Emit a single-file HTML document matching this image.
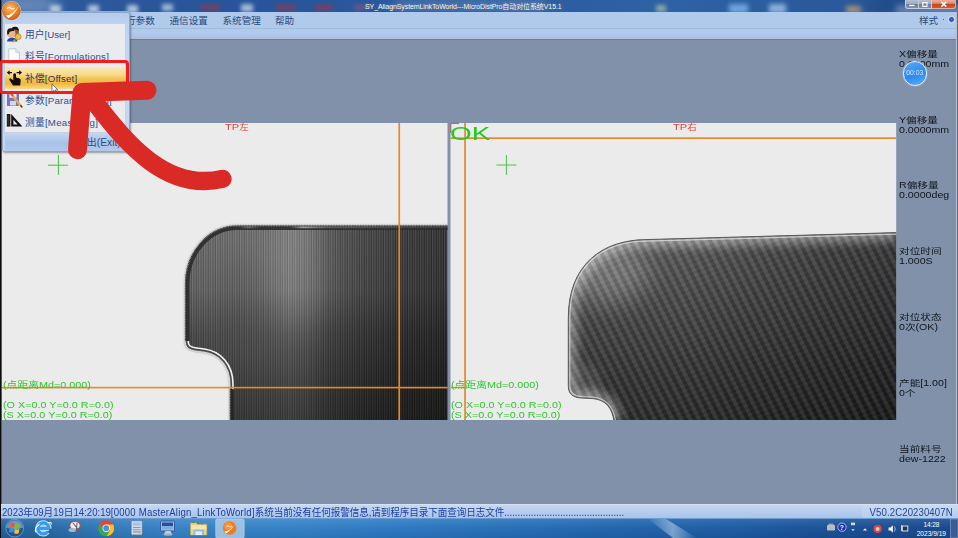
<!DOCTYPE html>
<html lang="zh">
<head>
<meta charset="utf-8">
<title>SY_AliagnSystemLinkToWorld---MicroDistPro自动对位系统V15.1</title>
<style>
*{box-sizing:border-box;margin:0;padding:0}
html,body{width:958px;height:538px;overflow:hidden}
body{position:relative;background:#8091a9;font-family:"Liberation Sans","Noto Sans CJK SC",sans-serif;color:#1f3f70}
.abs{position:absolute}
.t{position:absolute;white-space:nowrap;line-height:1;transform-origin:0 0}
#titlebar{left:0;top:0;width:958px;height:12px;background:linear-gradient(90deg,#2d5c9c 0%,#27549a 25%,#2a5a9e 45%,#2d62a4 70%,#265494 100%);overflow:hidden}
#menubar{left:0;top:11.5px;width:956px;height:17px;background:#b0caeb}
#substrip{left:0;top:27.9px;width:956px;height:11.9px;background:linear-gradient(#b4cceb 0,#b1c9ea 40%,#a9c3e6 78%,#b6c4da 86%,#6f7b8f 94%,#6f7b8f 100%);border-top:1.2px solid #a0bcdc}
#work{left:0;top:39.8px;width:956px;height:465px;background:#8091a9}
.panel{background:#ebebeb;overflow:hidden}
#status{left:0;top:504.3px;width:958px;height:14px;background:linear-gradient(#c6d8f3,#a9c3ea);border-top:1px solid #d5e2f5}
#taskbar{left:0;top:518.3px;width:958px;height:19.7px;background:linear-gradient(rgba(255,255,255,.10),rgba(255,255,255,0) 45%,rgba(0,0,20,.10)),linear-gradient(90deg,#27629c 0%,#2a6aa6 5%,#3179b8 10%,#3884c8 18%,#3684c8 28%,#2f7cc4 40%,#2870b8 54%,#2366ae 65%,#1f5ea6 76%,#1c5298 87%,#1b4a8c 100%);border-top:1px solid #6a9cd0}
.g{color:#2ec62e}
.side{color:#10151c;font-size:8.5px;transform:scaleX(1.25)}
.mi{color:#294878;font-size:9.6px}
</style>
</head>
<body>
<div id="titlebar" class="abs">
<div class="abs" style="left:-5px;top:-4px;width:60px;height:18px;background:#8aa4c8;filter:blur(8px);opacity:0.75"></div>
<div class="abs" style="left:50px;top:5px;width:11px;height:8px;background:#d0deec;filter:blur(2.2px);opacity:0.8"></div>
<div class="abs" style="left:88px;top:5px;width:11px;height:8px;background:#d0deec;filter:blur(2.2px);opacity:0.8"></div>
<div class="abs" style="left:127px;top:5px;width:11px;height:8px;background:#d0deec;filter:blur(2.2px);opacity:0.8"></div>
<div class="abs" style="left:162px;top:4px;width:11px;height:7px;background:#c8d8e8;filter:blur(2.2px);opacity:0.75"></div>
<div class="abs" style="left:241px;top:4px;width:12px;height:8px;background:#d0dcea;filter:blur(2.2px);opacity:0.75"></div>
<div class="abs" style="left:201px;top:4.5px;width:19px;height:5px;background:#8c3a50;filter:blur(2px);opacity:0.85"></div>
<div class="abs" style="left:276px;top:4.5px;width:19px;height:5px;background:#8c3a50;filter:blur(2px);opacity:0.85"></div>
<div class="abs" style="left:314px;top:4.5px;width:19px;height:5px;background:#8c3a50;filter:blur(2px);opacity:0.85"></div>
<div class="abs" style="left:354px;top:5px;width:12px;height:5px;background:#8a5a78;filter:blur(2px);opacity:0.7"></div>
<div class="abs" style="left:395px;top:-2px;width:150px;height:14px;background:#b8c8e0;filter:blur(6px);opacity:0.22"></div>
<div class="abs" style="left:656px;top:5px;width:10px;height:7px;background:#b8c4b0;filter:blur(2px);opacity:0.7"></div>
<div class="abs" style="left:729px;top:4px;width:19px;height:9px;background:#7ab4ec;filter:blur(2.5px);opacity:0.85"></div>
<div class="abs" style="left:769px;top:4px;width:17px;height:9px;background:#a8c8ec;filter:blur(2.5px);opacity:0.8"></div>
<div class="abs" style="left:846px;top:6px;width:15px;height:7px;background:#c8a070;filter:blur(2.5px);opacity:0.8"></div>
<div class="abs" style="left:870px;top:-4px;width:90px;height:18px;background:#183c74;filter:blur(8px);opacity:0.5"></div>
<div class="t" style="left:365px;top:2.5px;font-size:7px;color:#fff;letter-spacing:-.1px;text-shadow:0 0 3px rgba(200,220,245,.55),0 0 1px #123">SY_AliagnSystemLinkToWorld---MicroDistPro自动对位系统V15.1</div>
<div class="abs" style="left:896px;top:5px;width:66px;height:10px;background:#9cb0cc;filter:blur(3px);opacity:.55"></div>
<div class="abs" style="left:904.5px;top:0;width:14.3px;height:8.5px;background:linear-gradient(#b4bfce 0,#9eacc0 45%,#6c809c 50%,#7c90ac 100%);border:.8px solid #c4d0e0;border-top:0;border-radius:0 0 0 3px"></div>
<div class="abs" style="left:918.8px;top:0;width:13.2px;height:8.5px;background:linear-gradient(#b4bfce 0,#9eacc0 45%,#6c809c 50%,#7c90ac 100%);border:.8px solid #c4d0e0;border-top:0;border-left:0"></div>
<div class="abs" style="left:932px;top:0;width:23.6px;height:8.5px;background:linear-gradient(#eeb09c 0,#e08c70 42%,#c8481e 52%,#cc5a30 100%);border:.8px solid #d8b0a8;border-top:0;border-left:0;border-radius:0 0 3px 0"></div>
<svg class="abs" style="left:900px;top:0" width="58" height="12" viewBox="900 0 58 12">
<rect x="909" y="4.6" width="5.6" height="1.7" fill="#fff" stroke="#5a6a84" stroke-width=".3"/>
<rect x="922.8" y="2.6" width="4.2" height="3.8" fill="none" stroke="#fff" stroke-width="1.1"/>
<path d="M941.4,1.8 L946.2,6.6 M946.2,1.8 L941.4,6.6" stroke="#fff" stroke-width="1.5"/>
</svg>
</div>
<div id="menubar" class="abs">
<div class="t mi" style="left:126px;top:4.3px">行参数</div>
<div class="t mi" style="left:169.5px;top:4.3px">通信设置</div>
<div class="t mi" style="left:222.5px;top:4.3px">系统管理</div>
<div class="t mi" style="left:275px;top:4.3px">帮助</div>
<div class="t mi" style="left:919px;top:4.3px">样式</div>
<div class="abs" style="left:942.5px;top:7px;width:1.5px;height:1.5px;background:#4a648c"></div>
<div class="abs" style="left:947.6px;top:4.2px;width:7.6px;height:7.6px;border-radius:50%;background:radial-gradient(circle closest-side at 50% 50%,#4a78d8 0,#2448a8 55%,#b0c2e2 75%,#d4e0f2 100%)"></div>
</div>
<div id="substrip" class="abs"></div>
<div id="work" class="abs"></div>
<svg class="abs" style="left:0;top:0" width="958" height="538" viewBox="0 0 958 538">
<defs>
<linearGradient id="lgL" gradientUnits="userSpaceOnUse" x1="185" y1="0" x2="448" y2="0">
<stop offset="0" stop-color="#626262"/><stop offset=".1" stop-color="#6a6a6a"/><stop offset=".3" stop-color="#717171"/><stop offset=".4" stop-color="#7c7c7c"/><stop offset=".46" stop-color="#727272"/><stop offset=".55" stop-color="#575757"/><stop offset=".68" stop-color="#444"/><stop offset=".82" stop-color="#383838"/><stop offset="1" stop-color="#2e2e2e"/>
</linearGradient>
<linearGradient id="lgLv" gradientUnits="userSpaceOnUse" x1="0" y1="225" x2="0" y2="420">
<stop offset="0" stop-color="#000" stop-opacity="0"/><stop offset=".33" stop-color="#000" stop-opacity=".05"/><stop offset=".56" stop-color="#000" stop-opacity=".28"/><stop offset=".8" stop-color="#000" stop-opacity=".42"/><stop offset="1" stop-color="#000" stop-opacity=".5"/>
</linearGradient>
<pattern id="vl" width="2.4" height="4" patternUnits="userSpaceOnUse"><rect width="1.2" height="4" fill="#fff" opacity=".13"/><rect x="1.2" width="1.2" height="4" fill="#000" opacity=".16"/></pattern>
<linearGradient id="lgR" gradientUnits="userSpaceOnUse" x1="700" y1="236" x2="700" y2="420">
<stop offset="0" stop-color="#606060"/><stop offset=".25" stop-color="#525252"/><stop offset=".5" stop-color="#444"/><stop offset=".75" stop-color="#353535"/><stop offset="1" stop-color="#2a2a2a"/>
</linearGradient>
<linearGradient id="lgRe" gradientUnits="userSpaceOnUse" x1="568" y1="0" x2="896" y2="0">
<stop offset="0" stop-color="#000" stop-opacity="0"/><stop offset=".35" stop-color="#000" stop-opacity=".04"/><stop offset=".6" stop-color="#000" stop-opacity=".2"/><stop offset=".8" stop-color="#000" stop-opacity=".32"/><stop offset="1" stop-color="#000" stop-opacity=".42"/>
</linearGradient>
<pattern id="wv" width="7.9" height="7.9" patternUnits="userSpaceOnUse" patternTransform="rotate(63)"><rect width="7.9" height="3.9" fill="#fff" opacity=".075"/><rect y="3.9" width="7.9" height="4" fill="#000" opacity=".12"/></pattern>
<pattern id="wv2" width="5" height="5" patternUnits="userSpaceOnUse" patternTransform="rotate(-20)"><rect width="5" height="2.5" fill="#fff" opacity=".018"/><rect y="2.5" width="5" height="2.5" fill="#000" opacity=".03"/></pattern>
<filter id="bl" x="-50%" y="-50%" width="200%" height="200%"><feGaussianBlur stdDeviation="12"/></filter>
<linearGradient id="rimL" gradientUnits="userSpaceOnUse" x1="240" y1="0" x2="448" y2="0"><stop offset="0" stop-color="#aaa" stop-opacity="0"/><stop offset=".04" stop-color="#aaa" stop-opacity=".5"/><stop offset=".1" stop-color="#aaa" stop-opacity="0"/><stop offset=".24" stop-color="#bbb" stop-opacity="0"/><stop offset=".3" stop-color="#ccc" stop-opacity=".7"/><stop offset=".42" stop-color="#aaa" stop-opacity=".35"/><stop offset="1" stop-color="#888" stop-opacity=".15"/></linearGradient>
<clipPath id="cpLs"><path d="M448,224.7 L237,224.7 C207.9,224.7 184.2,251.1 184.2,283.7 L184.2,341 C184.2,348 188,351 196,352 L204,353 C218,355 229,366 229,384 L229,390 L229,421 L448,421 Z"/></clipPath>
<clipPath id="cpRs"><path d="M897,232.6 L645,239.6 C602.2,240.4 568.3,264.4 568.3,318 L568.3,386 C568.3,394 573,397.5 581,398 L592,398.5 C606,399.5 612,408 614,421 L897,421 Z"/></clipPath>
<filter id="bl5" x="-10%" y="-10%" width="120%" height="120%"><feGaussianBlur stdDeviation="5"/></filter>
<clipPath id="cpL"><rect x="2" y="123" width="445.5" height="297"/></clipPath>
<clipPath id="cpR"><rect x="450.5" y="123" width="445.7" height="297"/></clipPath>
</defs>
<!-- panels -->
<rect x="2" y="123" width="445.5" height="297" fill="#ebebeb"/>
<rect x="450.5" y="123" width="445.7" height="297" fill="#ebebeb"/>
<rect x="0" y="0" width="1.4" height="538" fill="#0c0c10"/>
<!-- left image -->
<g clip-path="url(#cpL)">
<path d="M448,224.7 L237,224.7 C207.9,224.7 184.2,251.1 184.2,283.7 L184.2,341 C184.2,348 188,351 196,352 L204,353 C218,355 229,366 229,384 L229,390 L229,421 L448,421 Z" fill="url(#lgL)"/>
<path d="M448,224.7 L237,224.7 C207.9,224.7 184.2,251.1 184.2,283.7 L184.2,341 C184.2,348 188,351 196,352 L204,353 C218,355 229,366 229,384 L229,390 L229,421 L448,421 Z" fill="url(#vl)"/>
<g clip-path="url(#cpLs)"><ellipse cx="296" cy="270" rx="30" ry="70" fill="#fff" opacity=".06" filter="url(#bl)"/>
<ellipse cx="240" cy="300" rx="30" ry="40" fill="#000" opacity=".07" filter="url(#bl)"/></g>
<path d="M448,224.7 L237,224.7 C207.9,224.7 184.2,251.1 184.2,283.7 L184.2,341 C184.2,348 188,351 196,352 L204,353 C218,355 229,366 229,384 L229,390 L229,421 L448,421 Z" fill="url(#lgLv)"/>
<g clip-path="url(#cpLs)">
<path d="M448,224.7 L237,224.7 C207.9,224.7 184.2,251.1 184.2,283.7 L184.2,341" fill="none" stroke="#2c2c2c" stroke-width="10.4" opacity=".92"/>
<path d="M448,227.4 L240,227.4" fill="none" stroke="url(#rimL)" stroke-width="1.6"/>
<path d="M184.2,341 C184.2,348 188,351 196,352 L204,353 C218,355 229,366 229,384 L229,390" fill="none" stroke="#f2f2f2" stroke-width="9.6"/>
<path d="M184.2,341 C184.2,348 188,351 196,352 L204,353 C218,355 229,366 229,384 L229,390" fill="none" stroke="#4a4a4a" stroke-width="6.4"/>
<path d="M184.2,341 C184.2,348 188,351 196,352 L204,353 C218,355 229,366 229,384 L229,390" fill="none" stroke="#e4e4e4" stroke-width="2.6"/>
<path d="M229,389 L229,421" fill="none" stroke="#242424" stroke-width="9.4" opacity=".9"/>
</g>
<path d="M448,224.7 L237,224.7 C207.9,224.7 184.2,251.1 184.2,283.7 L184.2,341 C184.2,348 188,351 196,352 L204,353 C218,355 229,366 229,384 L229,390 L229,421" fill="none" stroke="#cfcfcf" stroke-width="1.3"/>
<path d="M448,224.7 L237,224.7 C207.9,224.7 184.2,251.1 184.2,283.7 L184.2,341 C184.2,348 188,351 196,352 L204,353 C218,355 229,366 229,384 L229,390 L229,421" fill="none" stroke="#d8d8d8" stroke-width="3.4" stroke-dasharray="0.8 0.8" opacity=".55"/>
</g>
<!-- right image -->
<g clip-path="url(#cpR)">
<path d="M897,232.6 L645,239.6 C602.2,240.4 568.3,264.4 568.3,318 L568.3,386 C568.3,394 573,397.5 581,398 L592,398.5 C606,399.5 612,408 614,421 L897,421 Z" fill="url(#lgR)"/>
<path d="M897,232.6 L645,239.6 C602.2,240.4 568.3,264.4 568.3,318 L568.3,386 C568.3,394 573,397.5 581,398 L592,398.5 C606,399.5 612,408 614,421 L897,421 Z" fill="url(#lgRe)"/>
<g clip-path="url(#cpRs)"><path d="M897,232.6 L645,239.6 C602.2,240.4 568.3,264.4 568.3,318 L568.3,386 C568.3,394 573,397.5 581,398 L592,398.5 C606,399.5 612,408 614,421" fill="none" stroke="#fff" stroke-width="17" opacity=".4" filter="url(#bl5)"/></g>
<g clip-path="url(#cpRs)"><ellipse cx="606" cy="272" rx="42" ry="32" fill="#fff" opacity=".22" filter="url(#bl)"/><ellipse cx="585" cy="385" rx="16" ry="22" fill="#fff" opacity=".12" filter="url(#bl5)"/></g>
<path d="M897,232.6 L645,239.6 C602.2,240.4 568.3,264.4 568.3,318 L568.3,386 C568.3,394 573,397.5 581,398 L592,398.5 C606,399.5 612,408 614,421 L897,421 Z" fill="url(#wv)"/>
<path d="M897,232.6 L645,239.6 C602.2,240.4 568.3,264.4 568.3,318 L568.3,386 C568.3,394 573,397.5 581,398 L592,398.5 C606,399.5 612,408 614,421 L897,421 Z" fill="url(#wv2)"/>
<path d="M897,234.1 L645,241.1 C603.2,241.9 569.8,265.4 569.8,318 L569.8,386 C569.8,393 574,396 581,396.5 L592,397 C607,398 613.5,407 615.5,421" fill="none" stroke="#dcdcdc" stroke-width="1.2" opacity=".8"/>
<path d="M897,232.6 L645,239.6 C602.2,240.4 568.3,264.4 568.3,318 L568.3,386 C568.3,394 573,397.5 581,398 L592,398.5 C606,399.5 612,408 614,421" fill="none" stroke="#5a5a5a" stroke-width="1"/>
</g>
<!-- orange lines -->
<rect x="398.4" y="123" width="1.7" height="297" fill="#e8882a"/>
<rect x="2" y="386.8" width="445.5" height="1.6" fill="#e8882a"/>
<rect x="464.2" y="123" width="1.7" height="297" fill="#e8882a"/>
<rect x="450.5" y="137.3" width="445.5" height="1.7" fill="#e8882a"/>
<rect x="450.5" y="386.8" width="15" height="1.4" fill="#e8882a"/>
<!-- small red corner -->
<path d="M450.8,133 L450.8,123.4 L459,123.4" fill="none" stroke="#b03030" stroke-width=".8"/>
<!-- green crosses -->
<path d="M48,165.2 H68 M58.4,155 V175" stroke="#48c048" stroke-width="1" fill="none"/>
<path d="M496.4,165 H516.4 M506.4,155 V175" stroke="#4cc24c" stroke-width="1" fill="none"/>
</svg>
<div class="t" style="left:224.6px;top:123.3px;font-size:9.2px;color:#e0452f;transform:scaleX(1.21)">TP<span style="font-size:.86em">左</span></div>
<div class="t" style="left:673px;top:123.3px;font-size:9.2px;color:#e0452f;transform:scaleX(1.21)">TP<span style="font-size:.86em">右</span></div>
<div class="t g" style="left:449.9px;top:125.6px;font-size:17.8px;color:#1ecb1e;transform:scaleX(1.57)">OK</div>
<div class="t g" style="left:2.6px;top:381.2px;font-size:8.6px;transform:scaleX(1.257)">(点距离Md=0.000)</div>
<div class="t g" style="left:2.6px;top:400.7px;font-size:8.6px;transform:scaleX(1.257)">(O X=0.0 Y=0.0 R=0.0)</div>
<div class="t g" style="left:2.6px;top:410.7px;font-size:8.6px;transform:scaleX(1.257)">(S X=0.0 Y=0.0 R=0.0)</div>
<div class="t g" style="left:450.8px;top:381.2px;font-size:8.6px;transform:scaleX(1.257)">(点距离Md=0.000)</div>
<div class="t g" style="left:450.8px;top:400.7px;font-size:8.6px;transform:scaleX(1.257)">(O X=0.0 Y=0.0 R=0.0)</div>
<div class="t g" style="left:450.8px;top:410.7px;font-size:8.6px;transform:scaleX(1.257)">(S X=0.0 Y=0.0 R=0.0)</div>
<div class="t side" style="left:898.5px;top:50px">X偏移量</div>
<div class="t side" style="left:898.5px;top:60px">0.0000mm</div>
<div class="t side" style="left:898.5px;top:116px">Y偏移量</div>
<div class="t side" style="left:898.5px;top:126px">0.0000mm</div>
<div class="t side" style="left:898.5px;top:181px">R偏移量</div>
<div class="t side" style="left:898.5px;top:191px">0.0000deg</div>
<div class="t side" style="left:898.5px;top:247px">对位时间</div>
<div class="t side" style="left:898.5px;top:257px">1.000S</div>
<div class="t side" style="left:898.5px;top:313px">对位状态</div>
<div class="t side" style="left:898.5px;top:323px">0次(OK)</div>
<div class="t side" style="left:898.5px;top:379px">产能[1.00]</div>
<div class="t side" style="left:898.5px;top:389px">0个</div>
<div class="t side" style="left:898.5px;top:445px">当前料号</div>
<div class="t side" style="left:898.5px;top:455px">dew-1222</div>
<div class="abs" style="left:955.6px;top:11.5px;width:1.2px;height:493px;background:#b2bccb"></div><div class="abs" style="left:956.8px;top:11.5px;width:1.2px;height:493px;background:#66708a"></div>
<div id="status" class="abs">
<div class="t" style="left:2px;top:2px;font-size:9.6px;color:#1e3f9c;transform:scaleY(1.1)">2023年09月19日14:20:19<span style="letter-spacing:.2px">[0000 MasterAlign_LinkToWorld]</span><span style="letter-spacing:-.1px">系统当前没有任何报警信息,请到程序目录下面查询日志文件</span>.............................................</div>
<div class="abs" style="left:862px;top:0;width:96px;height:14px;background:linear-gradient(#c9daf4,#b4cbee)"></div>
<div class="t" style="left:869.6px;top:2px;font-size:9.6px;color:#27488a;letter-spacing:.1px;transform:scaleY(1.1)">V50.2C20230407N</div>
</div>
<div id="taskbar" class="abs">
<svg class="abs" style="left:0;top:-1.3px" width="958" height="21" viewBox="0 518 958 21">
<defs>
<radialGradient id="orb" cx=".5" cy=".4" r=".6"><stop offset="0" stop-color="#4a8cc8"/><stop offset=".6" stop-color="#235c9c"/><stop offset="1" stop-color="#1c4880"/></radialGradient>
<linearGradient id="streak" x1="0" y1="0" x2="1" y2="0"><stop offset="0" stop-color="#fff" stop-opacity="0"/><stop offset=".5" stop-color="#cfe4f8" stop-opacity=".5"/><stop offset="1" stop-color="#fff" stop-opacity="0"/></linearGradient>
</defs>
<polygon points="648,519 666,519 697,538 673,538" fill="url(#streak)"/>

<!-- start orb -->
<circle cx="14.7" cy="528.2" r="8.8" fill="url(#orb)" stroke="#8cb4dc" stroke-width=".7" opacity=".95"/>
<path d="M6.2,527.6 A8.6,8.6 0 0 1 23.2,527.6 Q14.7,530.8 6.2,527.6z" fill="#b8d0e8" opacity=".45"/>
<path d="M10.4,523.4 q2.2,-1.2 4.4,-.2 l-.6,4.3 q-2.1,-.9 -4.4,.2z" fill="#ea5a28"/>
<path d="M15.8,523.6 q2.2,1 4.5,-.1 l-.6,4.4 q-2.2,1 -4.5,0z" fill="#7cbc34"/>
<path d="M9.5,528.4 q2.2,-1.1 4.4,-.1 l-.6,4.3 q-2.1,-1 -4.4,.1z" fill="#2c94e4"/>
<path d="M14.8,528.9 q2.2,1 4.5,0 l-.6,4.3 q-2.2,1 -4.5,0z" fill="#f8c024"/>
<!-- IE -->
<path d="M48.9,528.4 H38.2 M48.9,528.4 A5.5,5.5 0 1 0 47.6,531.9" fill="none" stroke="#e4f2fe" stroke-width="5.2" stroke-linejoin="round" opacity=".85"/>
<path d="M48.9,528.4 H38.2 M48.9,528.4 A5.5,5.5 0 1 0 47.6,531.9" fill="none" stroke="#2f9ef2" stroke-width="3.3" stroke-linejoin="round"/>
<path d="M36.2,532.5 Q33.5,528.5 39.5,524.2 M47.5,523 Q52,521 51.2,524.6" fill="none" stroke="#eef6fe" stroke-width="1.1"/>
<!-- snipping tool -->
<ellipse cx="75" cy="525.5" rx="5.2" ry="4" fill="#f0eeee" stroke="#c84848" stroke-width="1.1"/>
<ellipse cx="72.5" cy="530" rx="4" ry="2" fill="#aab4c4"/>
<path d="M73,523 L81,533 M77,523 L76,534" stroke="#606878" stroke-width="1.1" fill="none"/>
<!-- chrome -->
<circle cx="106.2" cy="528.2" r="7.9" fill="#e84436"/>
<path d="M106.2,528.2 L99.4,524.2 A7.9,7.9 0 0 0 106.8,536.1 L110,530.5z" fill="#34a853"/>
<path d="M106.2,528.2 L114,528 A7.9,7.9 0 0 1 106.8,536.1 L110.3,530z" fill="#fbc116"/>
<path d="M106.2,524.6 L113.2,524.6 A7.9,7.9 0 0 1 106.8,536.1 L110.2,530.2z" fill="#fbc116"/>
<circle cx="106.2" cy="528.2" r="3.7" fill="#f4f4f4"/>
<circle cx="106.2" cy="528.2" r="2.9" fill="#4a8af4"/>
<!-- calculator -->
<rect x="131.5" y="521" width="10.5" height="13.7" rx=".8" fill="#d4dce8" stroke="#8a9ab4" stroke-width=".6"/>
<rect x="133" y="522.5" width="7.5" height="3.2" fill="#a8c0e4"/>
<path d="M133,527.5h7.5M133,529.7h7.5M133,531.9h7.5" stroke="#8894aa" stroke-width="1.1"/>
<rect x="138.6" y="531" width="2" height="2.4" fill="#e8a040"/>
<!-- computer -->
<rect x="160.5" y="521" width="14" height="10" rx="1" fill="#9cc0e8" stroke="#385a94" stroke-width="1"/>
<rect x="162" y="522.5" width="11" height="3.5" fill="#2c4ca0"/>
<rect x="162" y="526" width="11" height="3.5" fill="#7aaee0"/>
<path d="M165.5,531 h5 l1.5,3.4 h-8z" fill="#c4ccd4"/>
<ellipse cx="168" cy="534.6" rx="4.6" ry="1.2" fill="#a8b0b8"/>
<!-- folder -->
<path d="M190.5,523 h6 l1,1.2 h9.3 v10.8 h-16.3z" fill="#f0d47c" stroke="#c8a850" stroke-width=".5"/>
<rect x="191" y="525.3" width="15.3" height="4" fill="#f8e8a8"/>
<rect x="193.5" y="529.5" width="10.5" height="5.5" fill="#8cc0ec"/>
<rect x="195.5" y="531.5" width="6.5" height="3.5" fill="#e8f0f8"/>
<circle cx="193.5" cy="522.3" r=".9" fill="#3c9c3c"/><circle cx="198" cy="523.3" r=".9" fill="#d84030"/><circle cx="202" cy="523.8" r=".9" fill="#4a7cd0"/>
<!-- active button -->
<rect x="215.7" y="519" width="28.5" height="19" rx="1.5" fill="#b4cfe8" opacity=".8" stroke="#d8e8f8" stroke-width=".6"/>
<circle cx="229.6" cy="528" r="6.8" fill="#f07a1c"/>
<circle cx="228.4" cy="526.4" r="4.2" fill="#f8a048" opacity=".7"/>
<path d="M224.5,531.5 Q230,531.5 236.5,522.5 Q231,530.5 226,533.5z" fill="#fff"/>
<path d="M226.5,526.5 q1.5,-1.5 3,0 q1,1 2.4,-.4" stroke="#fff" stroke-width=".8" fill="none"/>
<!-- tray -->
<rect x="827" y="525" width="8" height="5.6" rx=".8" fill="#b8bcc0"/>
<rect x="828.5" y="523.6" width="5" height="1.4" fill="#a0a4a8"/>
<circle cx="842" cy="527.2" r="4.2" fill="#2030b0" stroke="#c8d4ec" stroke-width=".8"/>
<rect x="851" y="522.6" width="4" height="2.6" fill="#d0d8e4"/>
<path d="M851.3,529.3 h3.4 l-1.7,1.8z" fill="#e8ecf4"/>
<path d="M863,530.6 h4 l-2,-2.4z" fill="#f0f4f8"/>
<circle cx="877.6" cy="529" r="4.1" fill="#e0483c"/>
<circle cx="877.6" cy="529" r="2" fill="#d8c8d0"/>
<path d="M888.5,527.5 h2 l2.4,-2.2 v7.4 l-2.4,-2.2 h-2z" fill="#f0f0f0"/>
<path d="M894.5,526.5 q1.5,2.5 0,5" stroke="#d0d4dc" stroke-width=".8" fill="none"/>
<rect x="902.3" y="526" width="5.5" height="5" fill="#283848" stroke="#e8ecf0" stroke-width=".9"/>
<path d="M901.5,525 v6" stroke="#e8ecf0" stroke-width=".8"/>
<rect x="950.3" y="519" width="7.7" height="19" fill="#3a5c94" stroke="#8aa4c8" stroke-width=".6"/>
</svg>
<div class="t" style="left:923.6px;top:3.2px;font-size:6.6px;color:#fff;letter-spacing:-.2px">14:28</div>
<div class="t" style="left:916.7px;top:12px;font-size:6.6px;color:#fff">2023/9/19</div>
<div class="t" style="left:839.8px;top:5.6px;font-size:6.5px;font-weight:bold;color:#fff">?</div>
</div>
<div class="abs" style="left:0;top:0;width:1.3px;height:538px;background:#0c0c10"></div>
<div class="abs" style="left:1.5px;top:10.9px;width:128.5px;height:2px;background:#b4cbed;border:1px solid #9ab0d0;border-bottom:0;border-radius:2px 2px 0 0"></div>
<div id="popup" class="abs" style="left:1.5px;top:11.7px;width:128.5px;height:140.3px;background:linear-gradient(#b4cbed 0,#bed3f0 12px,#c9daf2 50%,#c2d5f0 100%);border:1px solid #8ea6c8;border-radius:2px;box-shadow:1px 1px 2px rgba(40,50,70,.45)">
<div class="abs" style="left:1.6px;top:10.7px;width:122.4px;height:109.5px;background:#eaebee;border:1px solid #c8d2e0"></div>
<div class="abs" style="left:2.5px;top:120.5px;width:123px;height:18px;background:linear-gradient(#c4d6f1,#a9c2e8 55%,#b3c9ec)"></div>
<div class="abs" style="left:2.1px;top:54px;width:121.6px;height:22.2px;background:linear-gradient(#fae8b4 0,#f8da8a 35%,#f3c558 52%,#f0b83c 75%,#f6cf6c 92%,#f9dc8c 100%)"></div>
<div class="t mi" style="left:22.6px;top:17.3px;font-size:9.7px;color:#2e4e8e">用户[User]</div>
<div class="t mi" style="left:22.6px;top:39px;font-size:9.7px;color:#2e4e8e;letter-spacing:.2px">料号[Formulations]</div>
<div class="t mi" style="left:22.6px;top:61px;font-size:9.7px;color:#2a3a5e;letter-spacing:.18px">补偿[Offset]</div>
<div class="t mi" style="left:22.6px;top:83px;font-size:9.7px;color:#2e4e8e;letter-spacing:.21px">参数[ParamSetting]</div>
<div class="t mi" style="left:22.6px;top:105px;font-size:9.7px;color:#2e4e8e;letter-spacing:.23px">测量[Measuring]</div>
<div class="t mi" style="left:73.7px;top:125.8px;font-size:10.3px;color:#2e4e8e">退出(Exit)</div>
<svg class="abs" style="left:-2.5px;top:-12.7px" width="135" height="156" viewBox="0 0 135 156">
<!-- user icon -->
<ellipse cx="15" cy="32" rx="4" ry="4.6" fill="#8a5a3a"/>
<path d="M11,30 Q12,26.3 15.5,26.8 Q19,27 18.8,31 Q16,28.8 11,30z" fill="#1c1410"/>
<ellipse cx="11.3" cy="33.6" rx="4.2" ry="4.6" fill="#e8b88a"/>
<path d="M7,32.5 Q7,27.6 11.5,28.3 Q14.5,28.8 14.2,31 Q11.5,30.5 9.6,32 Q9,34.5 7.6,35z" fill="#1c1c1c"/>
<path d="M7,41.5 Q7.5,37.5 12.5,37.8 Q17,38 17.5,41.5z" fill="#2848a8"/>
<circle cx="18.2" cy="36.8" r="3" fill="#e8c040" stroke="#a88418" stroke-width=".6"/>
<path d="M15.5,39.5 l-3,2.6" stroke="#c8a020" stroke-width="1.6"/>
<!-- page icon -->
<path d="M8.8,48.8 h7 l3.6,3.6 v11.2 h-10.6z" fill="#fbfcfe" stroke="#b4bcc8" stroke-width=".8"/>
<path d="M15.8,48.8 v3.6 h3.6" fill="#e4e8f0" stroke="#b4bcc8" stroke-width=".6"/>
<!-- offset hand icon -->
<path d="M8.2,72.6 h3.8 M16.6,72.6 h4" stroke="#111" stroke-width="1.3"/>
<path d="M9.6,70.3 l-2.8,2.3 l2.8,2.3z M19.2,70.3 l2.8,2.3 l-2.8,2.3z" fill="#111"/>
<path d="M13.3,74 q1.35,-1.5 2.7,0 v3.6 l3.6,1 q1.2,.4 1.1,1.8 l-.5,5.2 h-7.2 l-3.6,-5.6 q-.5,-1.5 .9,-1.7 l3,2z" fill="#111"/>
<!-- param icon -->
<rect x="7.5" y="93" width="11" height="12.5" fill="#7c74c8" stroke="#5048a0" stroke-width=".6"/>
<rect x="9.5" y="93.3" width="7" height="4.5" fill="#e8eaf4"/>
<rect x="10" y="101" width="6" height="4.5" fill="#d4d8ec"/>
<path d="M12,95 L21.5,106.5" stroke="#e8b040" stroke-width="2.2"/>
<path d="M11,93.8 L13,96" stroke="#d05838" stroke-width="2.2"/>
<path d="M20.5,105.3 l1.8,2.2" stroke="#444" stroke-width="1.4"/>
<!-- measure icon -->
<path d="M6.8,114 v12.6 h3.6 v-12.6z" fill="#1a1a1a"/>
<path d="M7.4,116h1.6M7.4,118h1.6M7.4,120h1.6M7.4,122h1.6M7.4,124h1.6" stroke="#777" stroke-width=".5"/>
<path d="M11.2,114 L22.4,126.6 H11.2z M13.4,119.8 V124.4 H17.6z" fill="#111" fill-rule="evenodd"/>
<!-- cursor -->
<path d="M52,84 v8.2 l2,-1.8 l1.5,3.3 l1.3,-.6 l-1.5,-3.2 h2.6z" fill="#fff" stroke="#333" stroke-width=".6"/>
</svg>
</div>
<div class="abs" style="left:-1.4px;top:60.2px;width:130px;height:34px;border:3.2px solid #f61c1c;border-radius:4px"></div>
<svg class="abs" style="left:0;top:0" width="40" height="24" viewBox="0 0 40 24">
<defs><radialGradient id="lg1" cx=".45" cy=".35" r=".7"><stop offset="0" stop-color="#fbb86a"/><stop offset=".5" stop-color="#f08a2a"/><stop offset="1" stop-color="#c8580c"/></radialGradient></defs>
<circle cx="11.4" cy="10.9" r="9.9" fill="#d8e4f4" opacity=".85"/>
<circle cx="11.4" cy="10.9" r="9" fill="url(#lg1)" stroke="#b8642a" stroke-width=".6"/>
<path d="M5.5,15.5 Q12,16 19,5.5 Q14.5,14.5 8.5,18.2z" fill="#fff"/>
<path d="M7,8.6 q2,-2.4 4,-.2 q1.4,1.5 3.4,-.6" stroke="#fff" stroke-width="1.1" fill="none"/>
</svg>
<svg class="abs" style="left:0;top:0" width="958" height="538" viewBox="0 0 958 538">
<g fill="none" stroke="#da2a26" stroke-width="19" stroke-linecap="round" stroke-linejoin="round">
<path d="M77.5,149.7 L82,92.5 L147,90.2"/>
<path d="M83,92.5 C96,91 144.4,197.5 222.5,178.9" stroke-width="18.4"/>
</g>
</svg>
<div class="abs" style="left:902.6px;top:61.2px;width:24.4px;height:24.4px;border-radius:50%;background:linear-gradient(160deg,#58a8f4,#2a8af0 55%,#5cb0f8);border:1.2px solid #e4eefa;box-shadow:0 0 1.5px rgba(255,255,255,.6)"></div>
<div class="t" style="left:906.2px;top:70px;font-size:6.9px;color:#e4f0fc;opacity:.92">00:03</div>
</body>
</html>
